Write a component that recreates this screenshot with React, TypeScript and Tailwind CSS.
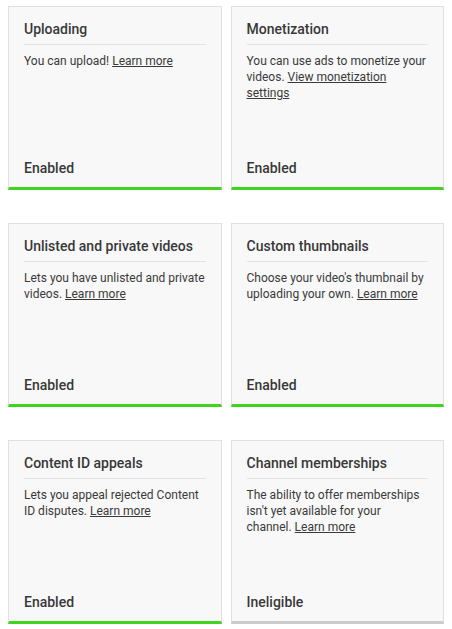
const cards = [
  { title: 'Uploading', text: 'You can upload!', link: 'Learn more', status: 'Enabled', ok: true },
  {
    title: 'Monetization',
    text: 'You can use ads to monetize your videos.',
    link: 'View monetization settings',
    status: 'Enabled',
    ok: true,
  },
  {
    title: 'Unlisted and private videos',
    text: 'Lets you have unlisted and private videos.',
    link: 'Learn more',
    status: 'Enabled',
    ok: true,
  },
  {
    title: 'Custom thumbnails',
    text: "Choose your video's thumbnail by uploading your own.",
    link: 'Learn more',
    status: 'Enabled',
    ok: true,
  },
  {
    title: 'Content ID appeals',
    text: 'Lets you appeal rejected Content ID disputes.',
    link: 'Learn more',
    status: 'Enabled',
    ok: true,
  },
  {
    title: 'Channel memberships',
    text: "The ability to offer memberships isn't yet available for your channel.",
    link: 'Learn more',
    status: 'Ineligible',
    ok: false,
  },
];

export default function App() {
  return (
    <div className="bg-white min-h-screen px-2 pt-[6px] font-['Roboto',sans-serif]">
      <div className="grid grid-cols-2 gap-x-[9px] gap-y-[33px]">
        {cards.map((c) => (
          <FeatureCard key={c.title} {...c} />
        ))}
      </div>
    </div>
  );
}

function FeatureCard({
  title,
  text,
  link,
  status,
  ok,
}: {
  title: string;
  text: string;
  link: string;
  status: string;
  ok: boolean;
}) {
  return (
    <div
      className={`flex flex-col h-[184px] bg-[#f8f8f8] border border-[#e0e0e0] border-b-[3px] px-[15px] pt-[12px] pb-[9px] ${
        ok ? 'border-b-[#41d31d]' : 'border-b-[#cccccc]'
      }`}
    >
      <h3 className="text-[14px] leading-5 font-medium text-[#383838] pb-[5px] border-b border-[#e3e3e3]">
        {title}
      </h3>
      <p className="mt-[8px] text-[12px] leading-4 text-[#3a3a3a]">
        {text}{' '}
        <a href="#" className="underline text-[#3a3a3a]">
          {link}
        </a>
      </p>
      <div className="mt-auto text-[14px] leading-5 font-medium text-[#383838]">{status}</div>
    </div>
  );
}
